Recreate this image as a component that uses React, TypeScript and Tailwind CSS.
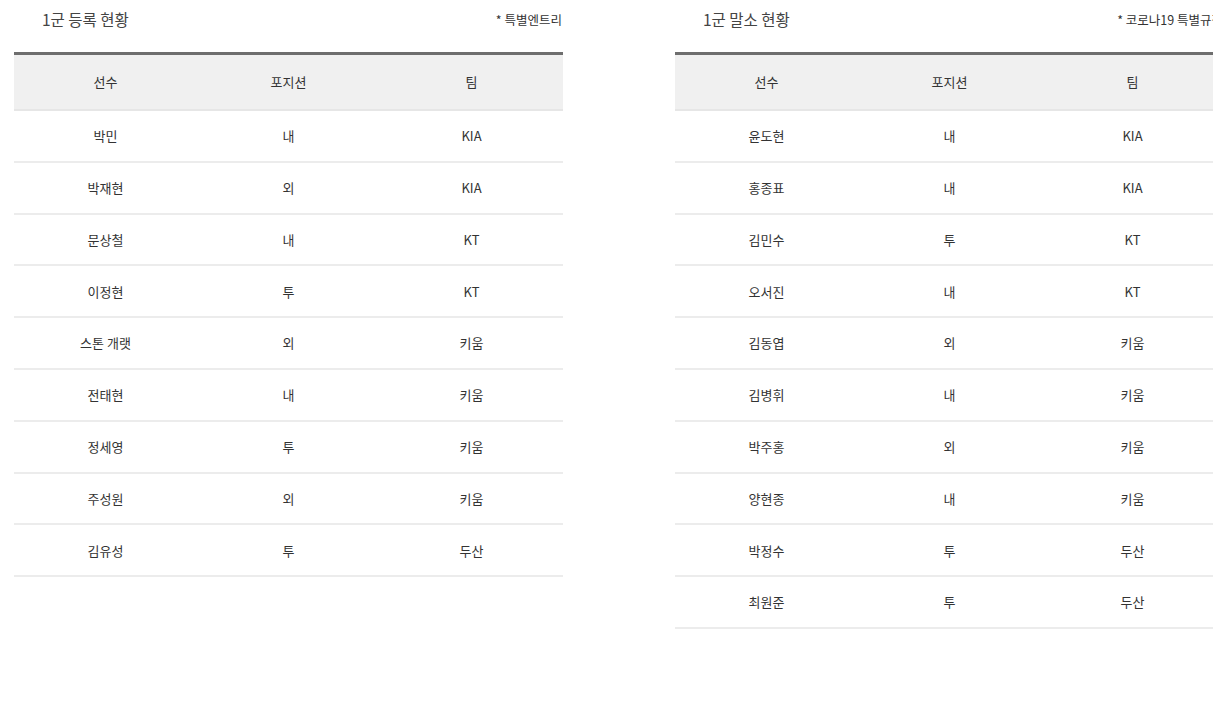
import React from "react";

type Row = [string, string, string];

const left: Row[] = [
  ["박민", "내", "KIA"],
  ["박재현", "외", "KIA"],
  ["문상철", "내", "KT"],
  ["이정현", "투", "KT"],
  ["스톤 개랫", "외", "키움"],
  ["전태현", "내", "키움"],
  ["정세영", "투", "키움"],
  ["주성원", "외", "키움"],
  ["김유성", "투", "두산"],
];

const right: Row[] = [
  ["윤도현", "내", "KIA"],
  ["홍종표", "내", "KIA"],
  ["김민수", "투", "KT"],
  ["오서진", "내", "KT"],
  ["김동엽", "외", "키움"],
  ["김병휘", "내", "키움"],
  ["박주홍", "외", "키움"],
  ["양현종", "내", "키움"],
  ["박정수", "투", "두산"],
  ["최원준", "투", "두산"],
];

function Section({ title, note, rows }: { title: string; note: string; rows: Row[] }) {
  return (
    <div className="w-[549px] shrink-0">
      <div className="h-[40px] flex items-center justify-between pl-[28px] pr-[1px]">
        <span className="text-[15.5px] text-[#444]">{title}</span>
        <span className="text-[12.5px] text-[#333]">{note}</span>
      </div>
      <div className="mt-[12px] border-t-[3px] border-[#6e6e6e]">
        <div className="grid grid-cols-3 h-[56px] bg-[#f0f0f0] border-b-2 border-[#e6e6e6] text-[13px] text-[#333]">
          <div className="flex items-center justify-center">선수</div>
          <div className="flex items-center justify-center">포지션</div>
          <div className="flex items-center justify-center">팀</div>
        </div>
        {rows.map((r, i) => (
          <div
            key={i}
            className="grid grid-cols-3 h-[51.8px] border-b-2 border-[#ececec] text-[13px] text-[#333]"
          >
            <div className="flex items-center justify-center">{r[0]}</div>
            <div className="flex items-center justify-center">{r[1]}</div>
            <div className="flex items-center justify-center">{r[2]}</div>
          </div>
        ))}
      </div>
    </div>
  );
}

export default function App() {
  return (
    <div
      className="w-[1213px] h-[723px] overflow-hidden bg-white"
      style={{ fontFamily: '"Noto Sans CJK KR", "Noto Sans", sans-serif' }}
    >
      <div className="flex gap-[112px] pl-[14px] w-[1240px]">
        <Section title="1군 등록 현황" note="* 특별엔트리" rows={left} />
        <Section title="1군 말소 현황" note="* 코로나19 특별규정" rows={right} />
      </div>
    </div>
  );
}
